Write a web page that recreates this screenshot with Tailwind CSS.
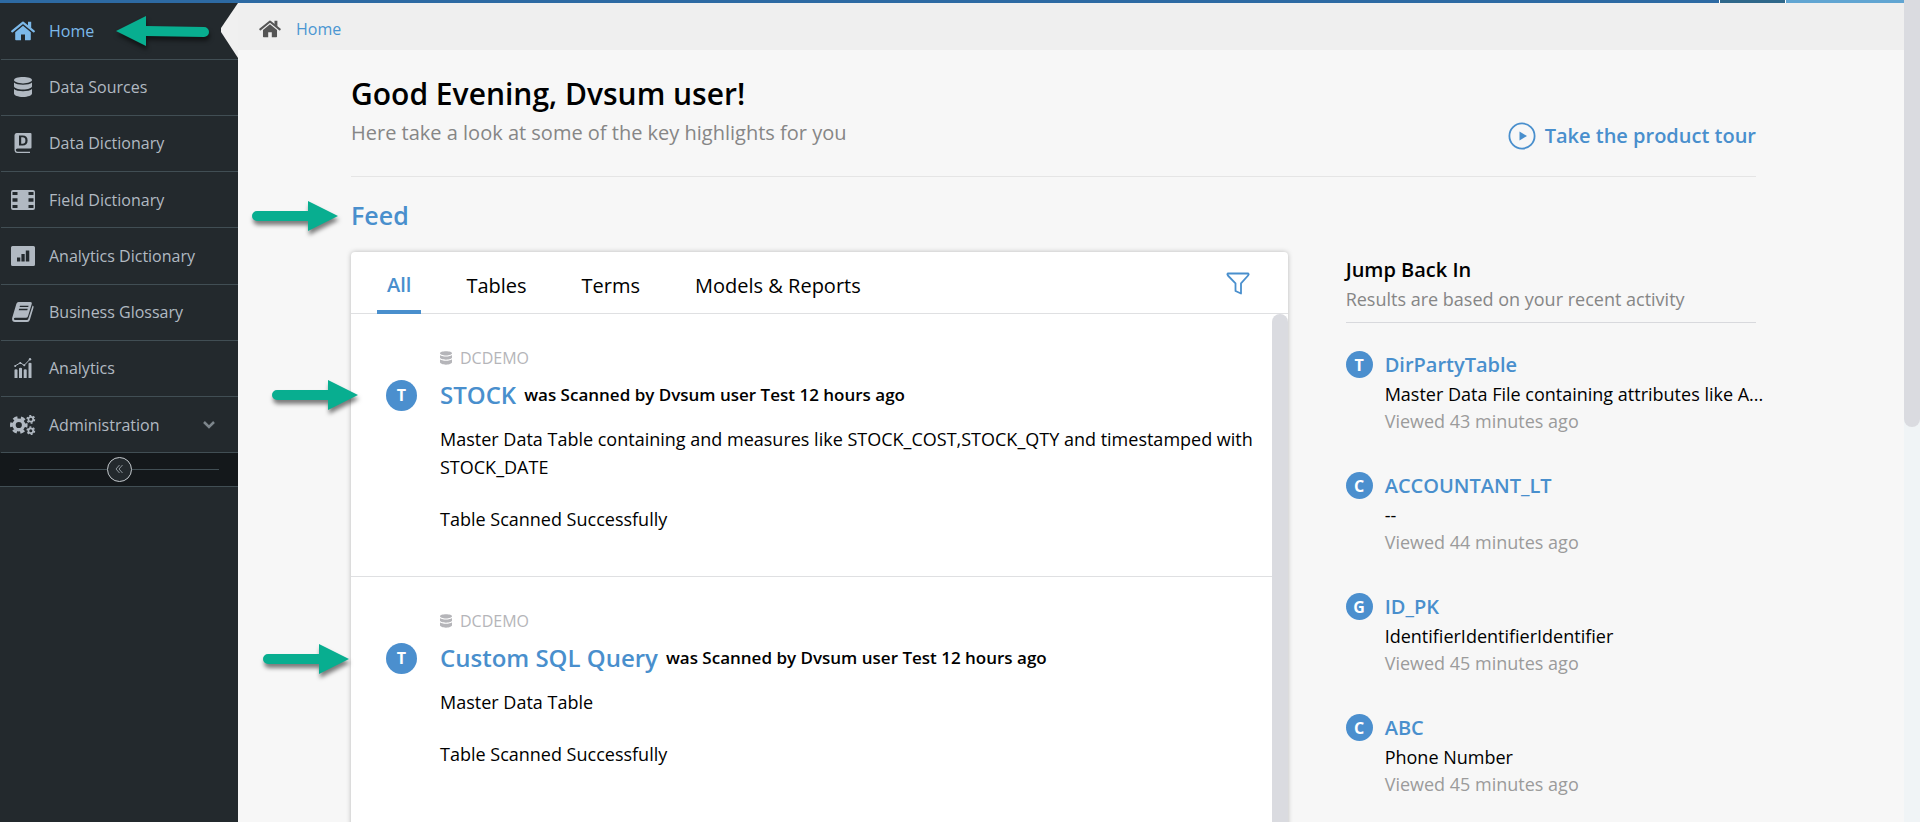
<!DOCTYPE html>
<html lang="en">
<head>
    <meta charset="UTF-8">
    <meta name="viewport" content="width=device-width, initial-scale=1.0">
    <title>Home</title>
    <script src="https://cdn.jsdelivr.net/npm/@tailwindcss/browser@4"></script>
</head>
<body class="font-['Open_Sans','Noto_Sans',sans-serif] bg-[#f7f7f7] text-black h-screen overflow-hidden flex">

    <!-- Shared icons -->
    <svg class="hidden">
        <symbol id="icon-home" viewBox="0 0 24 20">
            <path d="M1.2 10.4 12 1.6l10.8 8.8" fill="none" stroke="currentColor" stroke-width="2.2" stroke-linecap="round" stroke-linejoin="round"/>
            <path d="M17 .8h3.2v6.6L17 4.8z"/>
            <path d="M12 4.8 4.2 11.2V18.4q0 .8.8.8h5v-5.6h4v5.6h5q.8 0 .8-.8v-7.2z"/>
        </symbol>
        <symbol id="icon-database" viewBox="0 0 18 20">
            <path d="M9 0c5 0 9 1.3 9 3s-4 3.4-9 3.4S0 4.700 0 3s4-3 9-3z"/>
            <path d="M0 5.600c1.500 1.500 5 2.200 9 2.200s7.500-.7 9-2.200v3.700c0 1.700-4 3.200-9 3.200S0 11 0 9.300z"/>
            <path d="M0 12c1.500 1.500 5 2.200 9 2.200s7.500-.7 9-2.200v4.500c0 1.800-4 3.500-9 3.500s-9-1.700-9-3.500z"/>
        </symbol>
        <symbol id="icon-arrow" viewBox="0 0 86 30">
            <path d="M5 10h51V0l30 15-30 15V20H5a5 5 0 0 1 0-10z"/>
        </symbol>
    </svg>

    <div class="flex-1 min-w-0 flex flex-col">
        <!-- Top strip -->
        <div class="h-[3px] shrink-0 flex gap-px bg-white">
            <div class="flex-1 bg-[#2d6aa3]"></div>
            <div class="w-[65px] bg-[#2f688a]"></div>
            <div class="w-[118px] bg-[#61a5d2]"></div>
        </div>

        <div class="flex-1 min-h-0 flex">
            <!-- Sidebar -->
            <nav class="w-[238px] shrink-0 bg-[#23292d] text-[#b1b9c2] text-base">
                <ul class="pl-px">
                    <li class="relative border-b border-[#414e54]">
                        <a href="#" class="h-14 flex items-center text-[#7cb9ea]">
                            <span class="w-12 flex justify-center pr-3"><svg class="w-6 h-5 ml-2 fill-current"><use href="#icon-home"/></svg></span>
                            Home
                        </a>
                        <svg class="absolute left-[115px] top-[13px] w-[93px] h-[30px] overflow-visible fill-[#08ae90] drop-shadow-[1px_4px_2px_rgba(0,0,0,0.5)]" viewBox="0 0 93 30"><path d="M0 15 30 0v10l58 1a5 5 0 0 1 0 10l-58-1v10z"/></svg>
                        <svg class="absolute right-0 top-0 w-[17px] h-[55px] fill-[#f0f0f0]" viewBox="0 0 17 55"><path d="M17 0v55L0 29v-4z"/></svg>
                    </li>
                    <li class="border-b border-[#414e54]">
                        <a href="#" class="h-[55px] pb-0.5 flex items-center">
                            <span class="w-12 flex justify-center pr-1"><svg class="w-[18px] h-5 fill-current"><use href="#icon-database"/></svg></span>
                            Data Sources
                        </a>
                    </li>
                    <li class="border-b border-[#414e54]">
                        <a href="#" class="h-[55px] pb-0.5 flex items-center">
                            <span class="w-12 flex justify-center pr-1">
                                <svg class="w-[18px] h-5 fill-current" viewBox="0 0 18 20">
                                    <path fill-rule="evenodd" d="M2.500 0H16.500q1 0 1 1v13.500q0 1-1 1H3.500q-1.700.1-1.700 1.600 0 1.600 1.700 1.700H16v1.200H3Q.5 19.800.5 17.300V2.200Q.5.2 2.500 0zM5 2.500v10h3.600c3.200 0 5-1.800 5-5s-1.800-5-5-5zM7.200 4.200h1.300c1.900 0 2.900 1.100 2.900 3.300s-1 3.300-2.900 3.300H7.200z"/>
                                </svg>
                            </span>
                            Data Dictionary
                        </a>
                    </li>
                    <li class="border-b border-[#414e54]">
                        <a href="#" class="h-[55px] flex items-center">
                            <span class="w-12 flex justify-center pr-1">
                                <svg class="w-6 h-5 fill-current" viewBox="0 0 24 20">
                                    <path fill-rule="evenodd" d="M2 0h20q2 0 2 2v16q0 2-2 2H2q-2 0-2-2V2Q0 0 2 0zM1.500 2v3h5V2zM1.500 8.300v3.400h5V8.300zM1.500 15v3h5v-3zM17.500 2v3h5V2zM17.500 8.300v3.400h5V8.300zM17.500 15v3h5v-3z"/>
                                </svg>
                            </span>
                            Field Dictionary
                        </a>
                    </li>
                    <li class="border-b border-[#414e54]">
                        <a href="#" class="h-14 flex items-center">
                            <span class="w-12 flex justify-center pr-1">
                                <svg class="w-6 h-5 fill-current" viewBox="0 0 24 20">
                                    <path fill-rule="evenodd" d="M1.500 0h21q1.500 0 1.500 1.500v17q0 1.500-1.500 1.500h-21Q0 20 0 18.500v-17Q0 0 1.500 0zM6 11.500v4h3.300v-4zM10.400 8v7.500h3.300V8zM14.800 4.500v11h3.500v-11z"/>
                                </svg>
                            </span>
                            Analytics Dictionary
                        </a>
                    </li>
                    <li class="border-b border-[#414e54]">
                        <a href="#" class="h-[55px] pb-0.5 flex items-center">
                            <span class="w-12 flex justify-center pr-1">
                                <svg class="w-6 h-5 fill-current" viewBox="0 0 24 20">
                                    <path fill-rule="evenodd" d="M7.500 0H19.500q1.800 0 1.300 1.700L17 14.200q-.5 1.500-2.200 1.500H4.200q-1.200 0-1.300 1.100 0 1.200 1.300 1.200h11.600q1.100 0 1.500-1.200L21.600 3.500q1.400.6.900 2.200L18.800 18q-.6 2-2.600 2H4Q1 20 1.100 16.800q0-.8.5-2.300L5.400 1.700Q6 .1 7.500 0zM9 3.700l-.4 1.400h8.600l.4-1.400zM8.100 6.800l-.4 1.400h8.600l.4-1.400z"/>
                                </svg>
                            </span>
                            Business Glossary
                        </a>
                    </li>
                    <li class="border-b border-[#414e54]">
                        <a href="#" class="h-[55px] pb-0.5 flex items-center">
                            <span class="w-12 flex justify-center pr-1">
                                <svg class="w-[18px] h-5 fill-current" viewBox="0 0 18 20">
                                    <path d="M.5 12q0-.8 1.500-.8t1.500.8V20h-3zM5 10.500q0-.8 1.500-.8t1.500.8V20H5zM9.700 12q0-.8 1.500-.8t1.500.8v8h-3zM14.500 5.500q0-.8 1.500-.8t1.500.8V20h-3z"/>
                                    <path d="M1 8 6.300 4.800 10.200 7.300 15.800 1.500" fill="none" stroke="currentColor" stroke-width="1"/>
                                    <circle cx="1.200" cy="8" r="1"/><circle cx="6.300" cy="4.900" r="1"/><circle cx="10.300" cy="7.200" r="1"/><circle cx="16" cy="1.200" r="1.200"/>
                                </svg>
                            </span>
                            Analytics
                        </a>
                    </li>
                    <li class="border-b border-[#414e54]">
                        <a href="#" class="h-[55px] flex items-center">
                            <span class="w-12 flex justify-center pr-1">
                                <svg class="w-[26px] h-5" viewBox="0 0 26 20" fill="none" stroke="currentColor">
                                    <circle cx="8.800" cy="10" r="4.800" stroke-width="3.400"/>
                                    <circle cx="8.800" cy="10" r="7.400" stroke-width="2.800" stroke-dasharray="4.300 3.449" stroke-dashoffset="2"/>
                                    <circle cx="20.800" cy="4.300" r="2.400" stroke-width="1.700"/>
                                    <circle cx="20.800" cy="4.300" r="3.700" stroke-width="1.400" stroke-dasharray="1.937 1.937"/>
                                    <circle cx="20.800" cy="15.700" r="2.400" stroke-width="1.700"/>
                                    <circle cx="20.800" cy="15.700" r="3.700" stroke-width="1.400" stroke-dasharray="1.937 1.937"/>
                                </svg>
                            </span>
                            <span class="flex-1">Administration</span>
                            <svg class="w-3 h-2 mr-[23px]" viewBox="0 0 12 8" fill="none" stroke="#7d868c" stroke-width="2.500"><path d="m1 1 5 5 5-5"/></svg>
                        </a>
                    </li>
                </ul>
                <div class="h-[34px] bg-[#14181b] border-b border-[#414e54] px-[19px] flex items-center">
                    <div class="flex-1 h-px bg-[#414e54]"></div>
                    <button type="button" aria-label="Collapse menu" class="w-[25px] h-[25px] rounded-full border border-[#c3c8cc] bg-[#23292d] flex items-center justify-center">
                        <svg class="w-2 h-[10px] mb-0.5" viewBox="0 0 8 10" fill="none" stroke="#8d959b" stroke-width="1"><path d="M4.500 1 1 5l3.500 4M7.500 1 4 5l3.500 4"/></svg>
                    </button>
                    <div class="flex-1 h-px bg-[#414e54]"></div>
                </div>
            </nav>

            <main class="flex-1 min-w-0 overflow-hidden">
                <!-- Breadcrumb -->
                <div class="h-[47px] bg-[#efefef] flex items-center pl-[21px] pt-1 gap-[15px]">
                    <svg class="w-[22px] h-[18px] fill-[#555] text-[#555]"><use href="#icon-home"/></svg>
                    <a href="#" class="text-base text-[#4a96d2]">Home</a>
                </div>

                <div class="pl-[113px] pr-[148px]">
                    <header class="pt-6 pb-[25px] border-b border-[#e5e5e5] flex justify-between items-end">
                        <div>
                            <h1 class="text-3xl leading-10 font-semibold">Good Evening, Dvsum user!</h1>
                            <p class="text-xl leading-9 pt-px text-[#868686]">Here take a look at some of the key highlights for you</p>
                        </div>
                        <a href="#" class="flex items-center gap-[9px] text-xl leading-[30px] font-semibold text-[#498fcd]">
                            <svg class="w-7 h-7" viewBox="0 0 28 28"><circle cx="14" cy="14" r="12.600" fill="none" stroke="currentColor" stroke-width="1.800"/><path d="M11.500 9.500v9l7.500-4.500z" fill="currentColor"/></svg>
                            Take the product tour
                        </a>
                    </header>

                    <div class="relative">
                        <h2 class="pt-[18px] pb-[17px] text-[25px] leading-10 font-semibold text-[#498fcd]">Feed</h2>
                        <svg class="absolute -left-[99px] top-6 w-[86px] h-[30px] overflow-visible fill-[#08ae90] drop-shadow-[1px_4px_2px_rgba(0,0,0,0.5)]"><use href="#icon-arrow"/></svg>
                    </div>

                    <div class="flex items-start">
                        <section class="w-2/3 bg-white rounded-sm shadow-[0_0_5px_rgba(0,0,0,0.25)]">
                            <div class="h-[62px] pl-[26px] pr-[38px] border-b border-[#dfe0e2] flex items-center justify-between">
                                <div class="h-full flex items-stretch gap-[35px] text-xl">
                                    <button type="button" class="px-[10px] pt-2 font-semibold text-[#498fcd] border-b-4 border-[#498fcd] -mb-px">All</button>
                                    <button type="button" class="px-[10px] pt-1.5">Tables</button>
                                    <button type="button" class="px-[10px] pt-1.5">Terms</button>
                                    <button type="button" class="px-[10px] pt-1.5">Models &amp; Reports</button>
                                </div>
                                <button type="button" aria-label="Filter" class="pt-0.5">
                                    <svg class="w-6 h-[23px]" viewBox="0 0 24 23" fill="none" stroke="#498fcd" stroke-width="1.800" stroke-linejoin="round"><path d="M1.700 1.500h20.600q.8.900-.2 2L15 11.300V21.500L9.500 19v-7.700L1.900 3.500Q1 2.400 1.700 1.500z"/></svg>
                                </button>
                            </div>
                            <div class="flex">
                                <div class="flex-1">
                                    <article class="relative pl-[35px] pr-3 pt-8 pb-[43px] border-b border-[#dfe0e2]">
                                        <svg class="absolute -left-[79px] top-[66px] w-[86px] h-[30px] overflow-visible fill-[#08ae90] drop-shadow-[1px_4px_2px_rgba(0,0,0,0.5)]"><use href="#icon-arrow"/></svg>
                                        <div class="pl-[54px] flex items-center gap-2 text-base leading-6 text-[#b5b5b9]">
                                            <svg class="w-3 h-[14px] fill-current"><use href="#icon-database"/></svg>
                                            DCDEMO
                                        </div>
                                        <div class="mt-[7px] flex items-center">
                                            <span class="w-[31px] h-[31px] mr-[23px] rounded-full bg-[#4b8fce] text-white text-base font-bold flex items-center justify-center">T</span>
                                            <h3 class="text-2xl leading-9 font-semibold text-[#498fcd]"><a href="#">STOCK</a></h3>
                                            <span class="ml-2 text-[17px] leading-7 font-semibold">was Scanned by Dvsum user Test 12 hours ago</span>
                                        </div>
                                        <p class="mt-3 pl-[54px] text-lg leading-7">Master Data Table containing and measures like STOCK_COST,STOCK_QTY and timestamped with STOCK_DATE</p>
                                        <p class="mt-6 pl-[54px] text-lg leading-7">Table Scanned Successfully</p>
                                    </article>
                                    <article class="relative pl-[35px] pr-3 pt-8 pb-[85px] border-b border-[#dfe0e2]">
                                        <svg class="absolute -left-[88px] top-[67px] w-[86px] h-[30px] overflow-visible fill-[#08ae90] drop-shadow-[1px_4px_2px_rgba(0,0,0,0.5)]"><use href="#icon-arrow"/></svg>
                                        <div class="pl-[54px] flex items-center gap-2 text-base leading-6 text-[#b5b5b9]">
                                            <svg class="w-3 h-[14px] fill-current"><use href="#icon-database"/></svg>
                                            DCDEMO
                                        </div>
                                        <div class="mt-[7px] flex items-center">
                                            <span class="w-[31px] h-[31px] mr-[23px] rounded-full bg-[#4b8fce] text-white text-base font-bold flex items-center justify-center">T</span>
                                            <h3 class="text-2xl leading-9 font-semibold text-[#498fcd]"><a href="#">Custom SQL Query</a></h3>
                                            <span class="ml-2 text-[17px] leading-7 font-semibold">was Scanned by Dvsum user Test 12 hours ago</span>
                                        </div>
                                        <p class="mt-3 pl-[54px] text-lg leading-7">Master Data Table</p>
                                        <p class="mt-6 pl-[54px] text-lg leading-7">Table Scanned Successfully</p>
                                    </article>
                                </div>
                                <div class="w-4 shrink-0 bg-[#dadbe0] rounded-t-full"></div>
                            </div>
                        </section>

                        <!-- Recently viewed -->
                        <aside class="w-1/3 pl-[58px]">
                            <div class="pt-1 pb-[9px] border-b border-[#d8d9dd]">
                                <h2 class="text-xl leading-7 font-semibold">Jump Back In</h2>
                                <p class="mt-px text-lg leading-7 text-[#868686]">Results are based on your recent activity</p>
                            </div>
                            <ul class="pt-7 space-y-[37px]">
                                <li class="flex items-start">
                                    <span class="w-[27px] h-[27px] mr-3 rounded-full bg-[#4b8fce] text-white text-base font-bold flex shrink-0 items-center justify-center">T</span>
                                    <div class="min-w-0">
                                        <a href="#" class="block text-xl leading-7 font-semibold text-[#498fcd]">DirPartyTable</a>
                                        <p class="mt-px text-lg leading-7 whitespace-nowrap">Master Data File containing attributes like A...</p>
                                        <p class="text-lg leading-[27px] text-[#9b9b9b]">Viewed 43 minutes ago</p>
                                    </div>
                                </li>
                                <li class="flex items-start">
                                    <span class="w-[27px] h-[27px] mr-3 rounded-full bg-[#4b8fce] text-white text-base font-bold flex shrink-0 items-center justify-center">C</span>
                                    <div class="min-w-0">
                                        <a href="#" class="block text-xl leading-7 font-semibold text-[#498fcd]">ACCOUNTANT_LT</a>
                                        <p class="mt-px text-lg leading-7 whitespace-nowrap">--</p>
                                        <p class="text-lg leading-[27px] text-[#9b9b9b]">Viewed 44 minutes ago</p>
                                    </div>
                                </li>
                                <li class="flex items-start">
                                    <span class="w-[27px] h-[27px] mr-3 rounded-full bg-[#4b8fce] text-white text-base font-bold flex shrink-0 items-center justify-center">G</span>
                                    <div class="min-w-0">
                                        <a href="#" class="block text-xl leading-7 font-semibold text-[#498fcd]">ID_PK</a>
                                        <p class="mt-px text-lg leading-7 whitespace-nowrap">IdentifierIdentifierIdentifier</p>
                                        <p class="text-lg leading-[27px] text-[#9b9b9b]">Viewed 45 minutes ago</p>
                                    </div>
                                </li>
                                <li class="flex items-start">
                                    <span class="w-[27px] h-[27px] mr-3 rounded-full bg-[#4b8fce] text-white text-base font-bold flex shrink-0 items-center justify-center">C</span>
                                    <div class="min-w-0">
                                        <a href="#" class="block text-xl leading-7 font-semibold text-[#498fcd]">ABC</a>
                                        <p class="mt-px text-lg leading-7 whitespace-nowrap">Phone Number</p>
                                        <p class="text-lg leading-[27px] text-[#9b9b9b]">Viewed 45 minutes ago</p>
                                    </div>
                                </li>
                            </ul>
                        </aside>
                    </div>
                </div>
            </main>
        </div>
    </div>

    <!-- Page scrollbar -->
    <div class="w-4 shrink-0 bg-[#f0f4f6]">
        <div class="h-[52%] bg-[#dadbe0] rounded-b-full"></div>
    </div>

</body>
</html>
